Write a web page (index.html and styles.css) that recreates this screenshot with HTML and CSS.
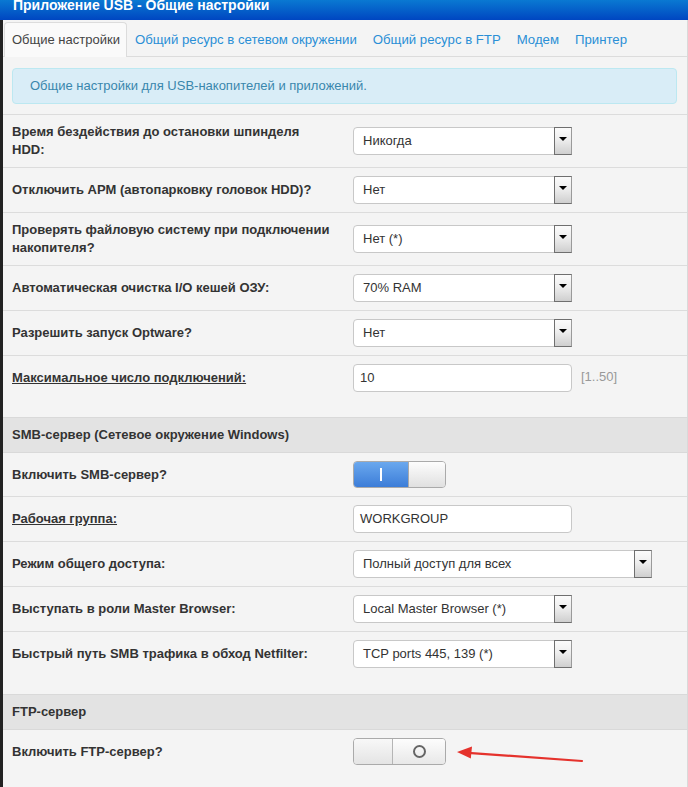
FILE: index.html
```html
<!DOCTYPE html>
<html lang="ru">
<head>
<meta charset="utf-8">
<title>Приложение USB - Общие настройки</title>
<link rel="stylesheet" href="styles.css">
</head>
<body>
<div class="titlebar"><span class="title">Приложение USB - Общие настройки</span></div>
<div class="page">
  <ul class="tabs">
    <li class="tab active">Общие настройки</li>
    <li class="tab">Общий ресурс в сетевом окружении</li>
    <li class="tab">Общий ресурс в FTP</li>
    <li class="tab">Модем</li>
    <li class="tab">Принтер</li>
  </ul>
  <div class="pane">
    <div class="alert">Общие настройки для USB-накопителей и приложений.</div>

    <div class="group first">
      <div class="row">
        <div class="label">Время бездействия до остановки шпинделя HDD:</div>
        <div class="ctrl"><div class="select"><span class="val">Никогда</span><span class="btn"></span></div></div>
      </div>
      <div class="row">
        <div class="label">Отключить APM (автопарковку головок HDD)?</div>
        <div class="ctrl"><div class="select"><span class="val">Нет</span><span class="btn"></span></div></div>
      </div>
      <div class="row">
        <div class="label">Проверять файловую систему при подключении накопителя?</div>
        <div class="ctrl"><div class="select"><span class="val">Нет (*)</span><span class="btn"></span></div></div>
      </div>
      <div class="row">
        <div class="label">Автоматическая очистка I/O кешей ОЗУ:</div>
        <div class="ctrl"><div class="select"><span class="val">70% RAM</span><span class="btn"></span></div></div>
      </div>
      <div class="row">
        <div class="label">Разрешить запуск Optware?</div>
        <div class="ctrl"><div class="select"><span class="val">Нет</span><span class="btn"></span></div></div>
      </div>
      <div class="row">
        <div class="label"><span class="hint-label">Максимальное число подключений:</span></div>
        <div class="ctrl"><div class="input">10</div><span class="range">[1..50]</span></div>
      </div>
    </div>

    <div class="section">SMB-сервер (Сетевое окружение Windows)</div>
    <div class="group">
      <div class="row">
        <div class="label">Включить SMB-сервер?</div>
        <div class="ctrl">
          <div class="toggle">
            <span class="on-part"><span class="bar"></span></span>
            <span class="knob knob-right"></span>
          </div>
        </div>
      </div>
      <div class="row">
        <div class="label"><span class="hint-label">Рабочая группа:</span></div>
        <div class="ctrl"><div class="input">WORKGROUP</div></div>
      </div>
      <div class="row">
        <div class="label">Режим общего доступа:</div>
        <div class="ctrl"><div class="select wide"><span class="val">Полный доступ для всех</span><span class="btn"></span></div></div>
      </div>
      <div class="row">
        <div class="label">Выступать в роли Master Browser:</div>
        <div class="ctrl"><div class="select"><span class="val">Local Master Browser (*)</span><span class="btn"></span></div></div>
      </div>
      <div class="row">
        <div class="label">Быстрый путь SMB трафика в обход Netfilter:</div>
        <div class="ctrl"><div class="select"><span class="val">TCP ports 445, 139 (*)</span><span class="btn"></span></div></div>
      </div>
    </div>

    <div class="section">FTP-сервер</div>
    <div class="group">
      <div class="row">
        <div class="label">Включить FTP-сервер?</div>
        <div class="ctrl">
          <div class="toggle">
            <span class="knob knob-left"></span>
            <span class="off-part"><span class="circle"></span></span>
          </div>
        </div>
      </div>
    </div>
  </div>
</div>
<svg class="arrow" width="140" height="24" viewBox="450 744 140 24" aria-hidden="true">
  <line x1="582" y1="761" x2="468" y2="752.8" stroke="#e5322c" stroke-width="2.2" stroke-linecap="round"/>
  <polygon points="457,752 472,746.5 470.8,758.5" fill="#e5322c"/>
</svg>
</body>
</html>
```

FILE: styles.css
```css
html, body {
  margin: 0;
  padding: 0;
}
body {
  background: #222;
  font-family: "Liberation Sans", Arial, sans-serif;
  font-size: 13px;
  color: #333;
  width: 688px;
  height: 787px;
  overflow: hidden;
  position: relative;
}
.titlebar {
  height: 20px;
  overflow: hidden;
  background: linear-gradient(#0a79d2, #0046c1);
  color: #fff;
  font-weight: bold;
  font-size: 14px;
  padding-left: 13px;
}
.title {
  display: block;
  line-height: 10px;
}
.page {
  margin-left: 3px;
  background: #f4f4f4;
  border-right: 1px solid #d9d9d9;
  height: 767px;
}
.tabs {
  display: flex;
  list-style: none;
  margin: 0;
  padding: 2px 0 0 1px;
  border-bottom: 1px solid #dcdcdc;
  height: 34px;
}
.tab {
  padding: 0 7px;
  line-height: 34px;
  height: 34px;
  font-size: 13.2px;
  color: #2a8fd6;
  border: 1px solid transparent;
  border-bottom: none;
  border-radius: 4px 4px 0 0;
}
.tab.active {
  background: #fafafa;
  border-color: #dcdcdc;
  color: #444;
  font-size: 13px;
  padding: 0 6px 0 7px;
}
.pane {
  padding-top: 11px;
}
.alert {
  margin: 0 10px 0 9px;
  padding: 8px 17px;
  line-height: 18px;
  background: #d9edf7;
  border: 1px solid #bce8f1;
  border-radius: 4px;
  color: #3a87ad;
}
.group {
  margin-bottom: 18px;
}
.group.first {
  margin-top: 10px;
  margin-bottom: 17px;
  border-top: 1px solid #dcdcdc;
}
.row {
  display: grid;
  grid-template-columns: 320px 1fr;
  column-gap: 21px;
  align-items: center;
  padding: 8px 0 8px 9px;
  border-bottom: 1px solid #dcdcdc;
  line-height: 18px;
}
.row:last-child {
  border-bottom: none;
}
.label {
  font-weight: bold;
  color: #333;
}
.hint-label {
  text-decoration: underline;
}
.ctrl {
  display: flex;
  align-items: center;
}
.select {
  display: flex;
  align-items: center;
  box-sizing: border-box;
  width: 219px;
  height: 28px;
  border: 1px solid #c8c8c8;
  border-radius: 4px;
  background: #fff;
  padding-left: 9px;
  color: #333;
}
.select.wide {
  width: 299px;
}
.select .btn {
  margin: -1px -1px -1px auto;
  width: 18px;
  height: 28px;
  box-sizing: border-box;
  border: 1px solid #6f6f6f;
  border-right-color: #9a9a9a;
  background: linear-gradient(#fbfbfb, #eeeeee 45%, #cfcfcf);
  display: flex;
  align-items: center;
  justify-content: center;
}
.select .btn::after {
  content: "";
  width: 0;
  height: 0;
  border-left: 4px solid transparent;
  border-right: 4px solid transparent;
  border-top: 4px solid #000;
  margin-bottom: 4px;
}
.input {
  box-sizing: border-box;
  width: 219px;
  height: 28px;
  line-height: 26px;
  border: 1px solid #c8c8c8;
  border-radius: 4px;
  background: #fff;
  padding-left: 6px;
  color: #333;
}
.range {
  margin-left: 9px;
  color: #999;
  margin-top: -3px;
}
.section {
  background: #e3e3e3;
  border-top: 1px solid #d9d9d9;
  border-bottom: 1px solid #d9d9d9;
  padding: 8px 9px;
  line-height: 18px;
  font-weight: bold;
  color: #333;
}
.toggle {
  display: flex;
  box-sizing: border-box;
  width: 93px;
  height: 27px;
  border: 1px solid #aaa;
  border-radius: 4px;
  overflow: hidden;
}
.on-part {
  width: 54px;
  background: linear-gradient(#6aa8ee, #3c7dd8);
  display: flex;
  align-items: center;
  justify-content: center;
}
.bar {
  width: 2px;
  height: 13px;
  background: #fff;
}
.knob {
  background: linear-gradient(#fdfdfd, #e0e0e0);
}
.knob-right {
  flex: 1;
  border-left: 1px solid #a9a9a9;
}
.knob-left {
  width: 38px;
  border-right: 1px solid #b5b5b5;
  background: linear-gradient(#f8f8f8, #e4e4e4);
}
.off-part {
  flex: 1;
  background: linear-gradient(#fdfdfd, #e8e8e8);
  display: flex;
  align-items: center;
  justify-content: center;
}
.circle {
  width: 9px;
  height: 9px;
  border: 2px solid #666;
  border-radius: 50%;
}
.arrow {
  position: absolute;
  left: 450px;
  top: 744px;
}
```
